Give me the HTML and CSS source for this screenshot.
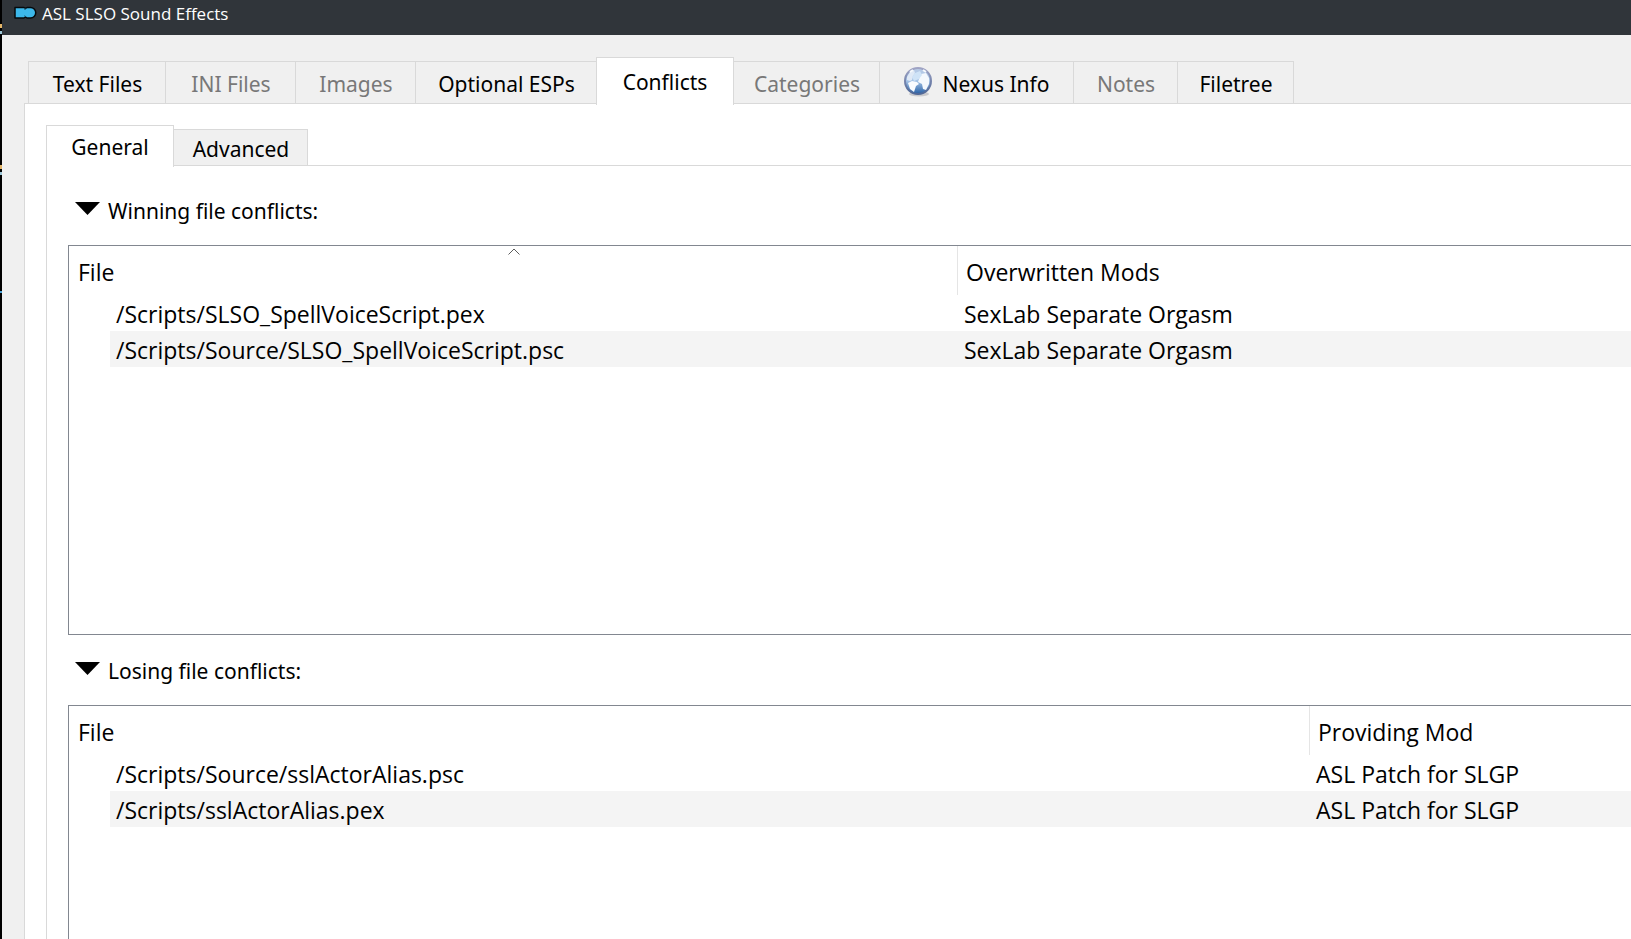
FILE: index.html
```html
<!DOCTYPE html>
<html lang="en">
<head>
<meta charset="utf-8">
<title>ASL SLSO Sound Effects</title>
<link rel="stylesheet" href="styles.css">
</head>
<body>
<div class="edge"></div>
<div class="window">
  <header class="titlebar">
    <svg class="logo" width="24" height="16" viewBox="0 0 24 16" aria-hidden="true">
      <path d="M2 2.500h9l1.500 1 1.500-1h3.500a5 5 0 0 1 0 10.500h-3.500l-1.500-1-1.500 1H2z" fill="#3cb8ea" stroke="#050a0d" stroke-width="1.500" stroke-linejoin="round"/>
      <path d="M12.500 3.500l-.8 1.500M12.500 12l-.8-1.500" fill="none" stroke="#14506d" stroke-width="1"/>
    </svg>
    <h1 class="title">ASL SLSO Sound Effects</h1>
  </header>
  <nav class="tabs" role="tablist">
    <button class="tab" role="tab">Text Files</button>
    <button class="tab" role="tab" disabled>INI Files</button>
    <button class="tab" role="tab" disabled>Images</button>
    <button class="tab" role="tab">Optional ESPs</button>
    <button class="tab active" role="tab" aria-selected="true">Conflicts</button>
    <button class="tab after-active" role="tab" disabled>Categories</button>
    <button class="tab" role="tab">
      <svg class="globe" width="28" height="30" viewBox="0 0 28 30" aria-hidden="true">
        <defs>
          <linearGradient id="sea" x1="0" y1="0" x2="0" y2="1"><stop offset="0" stop-color="#b9cbe6"/><stop offset="0.500" stop-color="#a5c3e6"/><stop offset="1" stop-color="#255fa5"/></linearGradient>
          <linearGradient id="rim" x1="0" y1="0" x2="0" y2="1"><stop offset="0" stop-color="#a0a4c4"/><stop offset="1" stop-color="#4f6796"/></linearGradient>
        </defs>
        <ellipse cx="15" cy="27" rx="10" ry="2.500" fill="#c9c9cc"/>
        <circle cx="14" cy="14" r="13" fill="url(#sea)" stroke="url(#rim)" stroke-width="2"/>
        <path d="M3 10l3-5 4-2 1 3-2 3-1 4-2 1-3-1z" fill="#dfe9f6"/>
        <path d="M4 16l4-2 5 1 2 2-3 2-2 6-4-3z" fill="#fafcff"/>
        <path d="M17 7l5-1 3 5v6l-3 6-3-1-1-5-4-2 1-3z" fill="#f4f8fd"/>
        <path d="M8 10l3-4 5-2 2 4-3 4-5 2z" fill="#cfe3f7"/>
        <path d="M6 5l3-2M19 3l3 2" stroke="#f5f8fc" stroke-width="2"/>
      </svg>
      Nexus Info</button>
    <button class="tab" role="tab" disabled>Notes</button>
    <button class="tab last" role="tab">Filetree</button>
  </nav>
  <main class="pane">
    <nav class="subtabs" role="tablist">
      <button class="tab active" role="tab" aria-selected="true">General</button>
      <button class="tab after-active last" role="tab">Advanced</button>
    </nav>
    <div class="subpane">
      <button class="section" aria-expanded="true">
        <svg class="arrow" width="25" height="13" viewBox="0 0 25 13" aria-hidden="true"><path d="M0 0h25L12.500 13z"/></svg>
        Winning file conflicts:</button>
      <div class="list">
        <table class="files">
          <colgroup><col class="indent"><col class="winning"><col></colgroup>
          <thead><tr><th colspan="2">File
            <svg class="sort" width="12" height="7" viewBox="0 0 12 7" aria-hidden="true"><path d="M.5 6.500L6 1l5.500 5.500" fill="none" stroke="#5c5c5c"/></svg></th><th>Overwritten Mods</th></tr></thead>
          <tbody>
            <tr><td></td><td>/Scripts/SLSO_SpellVoiceScript.pex</td><td>SexLab Separate Orgasm</td></tr>
            <tr><td></td><td>/Scripts/Source/SLSO_SpellVoiceScript.psc</td><td>SexLab Separate Orgasm</td></tr>
          </tbody>
        </table>
      </div>
      <button class="section" aria-expanded="true">
        <svg class="arrow" width="25" height="13" viewBox="0 0 25 13" aria-hidden="true"><path d="M0 0h25L12.500 13z"/></svg>
        Losing file conflicts:</button>
      <div class="list open">
        <table class="files">
          <colgroup><col class="indent"><col class="losing"><col></colgroup>
          <thead><tr><th colspan="2">File</th><th>Providing Mod</th></tr></thead>
          <tbody>
            <tr><td></td><td>/Scripts/Source/sslActorAlias.psc</td><td>ASL Patch for SLGP</td></tr>
            <tr><td></td><td>/Scripts/sslActorAlias.pex</td><td>ASL Patch for SLGP</td></tr>
          </tbody>
        </table>
      </div>
    </div>
  </main>
</div>
</body>
</html>
```

FILE: styles.css
```css
* { box-sizing: border-box; }

body {
  margin: 0;
  min-height: 100vh;
  display: flex;
  background: #f0f0f0;
  color: #000;
  font-family: "Noto Sans", sans-serif;
}

button {
  font: inherit;
  color: inherit;
  background: none;
  border: 0;
  padding: 0;
  white-space: nowrap;
}

/* Sliver of the desktop left of the window */
.edge {
  width: 2px;
  background: linear-gradient(#000 24px, #e3b568 24px 28px, #000 28px 31px, #9cc7d8 31px 34px, #000 34px 165px, #e3b568 165px 169px, #000 169px 172px, #9cc7d8 172px 175px, #000 175px 291px, #4aa3d8 291px 293px, #000 293px);
}

.window {
  flex: 1;
  min-width: 0;
  display: flex;
  flex-direction: column;
}

.titlebar {
  height: 35px;
  padding: 0 0 8px 11px;
  display: flex;
  align-items: center;
  gap: 5px;
  background: #30353a;
  color: #fff;
}

.logo { margin-bottom: 2px; }

.title {
  margin: 0;
  font: 400 17px/27px "Open Sans", sans-serif;
}

.tabs,
.subtabs {
  display: grid;
  align-items: end;
  font-size: 21px;
}

.tabs {
  grid-template-columns: 137px 130px 120px 181px 138px 145px 194px 104px 117px;
  padding: 22px 0 0 26px;
}

.tab {
  height: 42px;
  padding: 3px 0 0 1px;
  display: flex;
  align-items: center;
  justify-content: center;
  gap: 10px;
  background: #f0f0f0;
  border: 1px solid #d9d9d9;
  border-width: 1px 0 0 1px;
}

.tab:disabled { color: #787878; }
.tab.after-active { border-left-width: 0; }
.tab.last { border-right-width: 1px; }

.tab.active {
  height: 48px;
  margin-bottom: -2px;
  padding: 0;
  background: #fff;
  border-right-width: 1px;
  position: relative;
}

.globe { margin-bottom: 5px; }

.pane {
  flex: 1;
  display: flex;
  flex-direction: column;
  margin-left: 22px;
  padding: 21px 0 0 21px;
  background: #fff;
  border: 1px solid #d9d9d9;
  border-width: 1px 0 0 1px;
}

.subtabs { grid-template-columns: 128px 134px; }
.subtabs .tab { height: 36px; }
.subtabs .tab.active { height: 42px; }

.subpane {
  flex: 1;
  display: flex;
  flex-direction: column;
  padding: 30px 0 0 21px;
  border: 1px solid #d9d9d9;
  border-width: 1px 0 0 1px;
}

.section {
  align-self: flex-start;
  display: flex;
  align-items: center;
  gap: 8px;
  height: 30px;
  margin: 0 0 19px 7px;
  font-size: 21px;
}

.arrow { margin-bottom: 5px; }

.list {
  height: 390px;
  margin-bottom: 21px;
  border: 1px solid #828790;
  border-right: 0;
}

.list.open {
  height: auto;
  flex: 1;
  margin-bottom: 0;
  border-bottom: 0;
}

.files {
  width: 100%;
  table-layout: fixed;
  border-collapse: separate;
  border-spacing: 0;
  font-family: "Open Sans", sans-serif;
  font-size: 23px;
  line-height: 34px;
  white-space: nowrap;
}

.indent { width: 41px; }
.winning { width: 847px; }
.losing { width: 1199px; }

.files th {
  position: relative;
  height: 49px;
  padding: 2px 0 0 9px;
  font-weight: 400;
  text-align: left;
}

.files th + th {
  padding-left: 8px;
  border-left: 1px solid #e5e5e5;
}

.files td {
  height: 36px;
  padding: 2px 0 0 6px;
}

.files td:first-child { padding: 0; }
.files td:last-child { padding-left: 7px; }
.files tr:nth-child(even) td + td { background: #f4f4f4; }

.sort {
  position: absolute;
  top: 2px;
  left: 50%;
  margin-left: -5px;
}
```
